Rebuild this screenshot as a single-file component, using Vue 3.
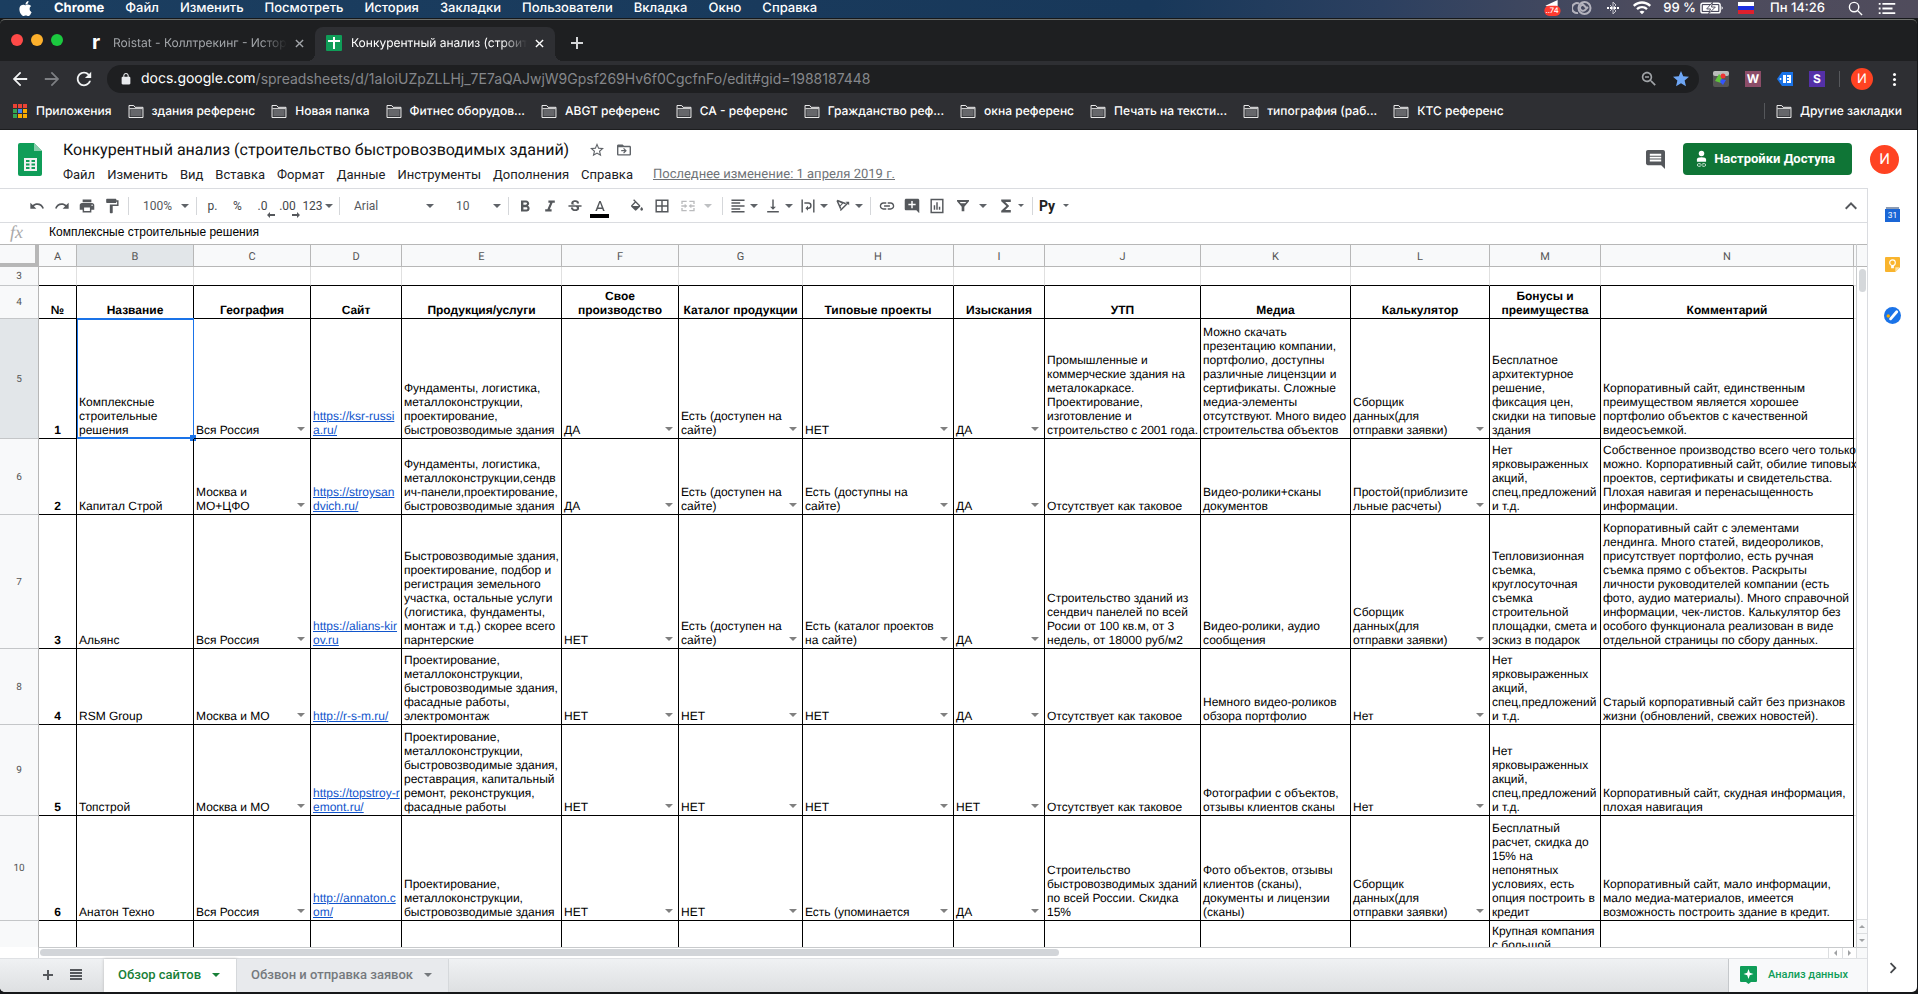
<script setup>
const osMenu = ['Файл', 'Изменить', 'Посмотреть', 'История', 'Закладки', 'Пользователи', 'Вкладка', 'Окно', 'Справка']
const bookmarks = ['здания референс', 'Новая папка', 'Фитнес оборудов...', 'ABGT референс', 'СА - референс', 'Гражданство реф...', 'окна референс', 'Печать на тексти...', 'типография (раб...', 'КТС референс']
const docMenu = ['Файл', 'Изменить', 'Вид', 'Вставка', 'Формат', 'Данные', 'Инструменты', 'Дополнения', 'Справка']
const appDots = ['#ea4335', '#ea4335', '#ea4335', '#34a853', '#4285f4', '#f9ab00', '#34a853', '#f9ab00', '#f9ab00']

const p = {
  apple: 'M12.152 6.896c-.948 0-2.415-1.078-3.96-1.04-2.04.027-3.91 1.183-4.961 3.014-2.117 3.675-.546 9.103 1.519 12.09 1.013 1.454 2.208 3.09 3.792 3.039 1.52-.065 2.09-.987 3.935-.987 1.831 0 2.35.987 3.96.948 1.637-.026 2.676-1.48 3.676-2.948 1.156-1.688 1.636-3.325 1.662-3.415-.039-.013-3.182-1.221-3.22-4.857-.026-3.04 2.48-4.494 2.597-4.559-1.429-2.09-3.623-2.324-4.39-2.376-2-.156-3.675 1.09-4.61 1.09zM15.53 3.83c.843-1.012 1.4-2.427 1.245-3.83-1.207.052-2.662.805-3.532 1.818-.78.896-1.454 2.338-1.273 3.714 1.338.104 2.715-.688 3.559-1.701',
  wifi: 'M1 9l2 2c4.97-4.97 13.03-4.97 18 0l2-2C16.93 2.93 7.08 2.93 1 9zm8 8l3 3 3-3c-1.65-1.66-4.34-1.66-6 0zm-4-4l2 2c2.76-2.76 7.24-2.76 10 0l2-2C15.14 9.14 8.87 9.14 5 13z',
  back: 'M20 11H7.83l5.59-5.59L12 4l-8 8 8 8 1.41-1.41L7.83 13H20v-2z',
  forward: 'M12 4l-1.41 1.41L16.17 11H4v2h12.17l-5.58 5.59L12 20l8-8z',
  reload: 'M17.65 6.35C16.2 4.9 14.21 4 12 4c-4.42 0-7.99 3.58-7.99 8s3.57 8 7.99 8c3.73 0 6.84-2.55 7.73-6h-2.08c-.82 2.33-3.04 4-5.65 4-3.31 0-6-2.69-6-6s2.69-6 6-6c1.66 0 3.14.69 4.22 1.78L13 11h7V4l-2.35 2.35z',
  lock: 'M18 8h-1V6c0-2.76-2.24-5-5-5S7 3.24 7 6v2H6c-1.1 0-2 .9-2 2v10c0 1.1.9 2 2 2h12c1.1 0 2-.9 2-2V10c0-1.1-.9-2-2-2zm-9-2c0-1.66 1.34-3 3-3s3 1.34 3 3v2H9V6z',
  zoomOut: 'M15.5 14h-.79l-.28-.27C15.41 12.59 16 11.11 16 9.5 16 5.91 13.09 3 9.5 3S3 5.91 3 9.5 5.91 16 9.5 16c1.61 0 3.09-.59 4.23-1.57l.27.28v.79l5 4.99L20.49 19l-4.99-5zm-6 0C7.01 14 5 11.99 5 9.5S7.01 5 9.5 5 14 7.01 14 9.5 11.99 14 9.5 14zM7 8.7h5v1.6H7z',
  star: 'M12 17.27L18.18 21l-1.64-7.03L22 9.24l-7.19-.61L12 2 9.19 8.63 2 9.24l5.46 4.73L5.82 21z',
  starLine: 'M22 9.24l-7.19-.62L12 2 9.19 8.63 2 9.24l5.46 4.73L5.82 21 12 17.27 18.18 21l-1.63-7.03L22 9.24zM12 15.4l-3.76 2.27 1-4.28-3.32-2.88 4.38-.38L12 6.1l1.71 4.04 4.38.38-3.32 2.88 1 4.28L12 15.4z',
  moveTo: 'M20 6h-8l-2-2H4c-1.1 0-2 .9-2 2v12c0 1.1.9 2 2 2h16c1.1 0 2-.9 2-2V8c0-1.1-.9-2-2-2zm0 12H4V8h16v10zM12 9l-1.2 1.2 1.9 1.9H8v1.8h4.7l-1.9 1.9L12 17l4-4z',
  undo: 'M12.5 8c-2.65 0-5.05.99-6.9 2.6L2 7v9h9l-3.62-3.62c1.39-1.16 3.16-1.88 5.12-1.88 3.54 0 6.55 2.31 7.6 5.5l2.37-.78C21.08 11.03 17.15 8 12.5 8z',
  redo: 'M18.4 10.6C16.55 8.99 14.15 8 11.5 8c-4.65 0-8.58 3.03-9.96 7.22L3.9 16c1.05-3.19 4.05-5.5 7.6-5.5 1.95 0 3.73.72 5.12 1.88L13 16h9V7l-3.6 3.6z',
  print: 'M19 8H5c-1.66 0-3 1.34-3 3v6h4v4h12v-4h4v-6c0-1.66-1.34-3-3-3zm-3 11H8v-5h8v5zm3-7c-.55 0-1-.45-1-1s.45-1 1-1 1 .45 1 1-.45 1-1 1zm-1-9H6v4h12V3z',
  paint: 'M18 4V3c0-.55-.45-1-1-1H5c-.55 0-1 .45-1 1v4c0 .55.45 1 1 1h12c.55 0 1-.45 1-1V6h1v4H9v11c0 .55.45 1 1 1h2c.55 0 1-.45 1-1v-9h8V4h-3z',
  bold: 'M15.6 10.79c.97-.67 1.65-1.77 1.65-2.79 0-2.26-1.75-4-4-4H7v14h7.04c2.09 0 3.71-1.7 3.71-3.79 0-1.52-.86-2.82-2.15-3.42zM10 6.5h3c.83 0 1.5.67 1.5 1.5s-.67 1.5-1.5 1.5h-3v-3zm3.5 9H10v-3h3.5c.83 0 1.5.67 1.5 1.5s-.67 1.5-1.5 1.5z',
  italic: 'M10 4v3h2.21l-3.42 8H6v3h8v-3h-2.21l3.42-8H18V4z',
  strike: 'M7.24 8.75c-.26-.48-.39-1.03-.39-1.67 0-.61.13-1.16.4-1.67.26-.5.63-.93 1.11-1.29.48-.35 1.05-.63 1.7-.83.66-.19 1.39-.29 2.18-.29.81 0 1.54.11 2.21.34.66.22 1.23.54 1.69.94.47.4.83.88 1.08 1.43.25.55.38 1.15.38 1.81h-3.01c0-.31-.05-.59-.15-.85-.09-.27-.24-.49-.44-.68-.2-.19-.45-.33-.75-.44-.3-.1-.66-.16-1.06-.16-.39 0-.74.04-1.03.13-.29.09-.53.21-.72.36-.19.16-.34.34-.44.55-.1.21-.15.43-.15.66 0 .48.25.88.74 1.21.38.25.77.48 1.41.7H7.39c-.05-.08-.11-.17-.15-.25zM21 12v-2H3v2h9.62c.18.07.4.14.55.2.37.17.66.34.87.51.21.17.35.36.43.57.07.2.11.43.11.69 0 .23-.05.45-.14.66-.09.2-.23.38-.42.53-.19.15-.42.26-.71.35-.29.08-.63.13-1.01.13-.43 0-.83-.04-1.18-.13s-.66-.23-.91-.42c-.25-.19-.45-.44-.59-.75-.14-.31-.25-.76-.25-1.21H6.4c0 .55.08 1.13.24 1.58.16.45.37.85.65 1.21.28.35.6.66.98.92.37.26.78.48 1.22.65.44.17.9.3 1.38.39.48.08.96.13 1.44.13.8 0 1.53-.09 2.18-.28s1.21-.45 1.67-.79c.46-.34.82-.77 1.07-1.27s.38-1.07.38-1.71c0-.6-.1-1.14-.31-1.61-.05-.11-.11-.23-.17-.33H21z',
  textColor: 'M11 3L5.5 17h2.25l1.12-3h6.25l1.12 3h2.25L13 3h-2zm-1.38 9L12 5.67 14.38 12H9.62z',
  fill: 'M16.56 8.94L7.62 0 6.21 1.41l2.38 2.38-5.15 5.15c-.59.59-.59 1.54 0 2.12l5.5 5.5c.29.29.68.44 1.06.44s.77-.15 1.06-.44l5.5-5.5c.59-.58.59-1.53 0-2.12zM5.21 10L10 5.21 14.79 10H5.21zM19 11.5s-2 2.17-2 3.5c0 1.1.9 2 2 2s2-.9 2-2c0-1.33-2-3.5-2-3.5z',
  borders: 'M3 3v18h18V3H3zm8 16H5v-6h6v6zm0-8H5V5h6v6zm8 8h-6v-6h6v6zm0-8h-6V5h6v6z',
  merge: 'M2 4h8v2H4v3H2zM14 4h8v5h-2V6h-6zM2 15h2v3h6v2H2zM20 15h2v5h-8v-2h6zM2 11h5V8.500l4 3.500-4 3.500V13H2zM22 11h-5V8.500L13 12l4 3.500V13h5z',
  align: 'M15 15H3v2h12v-2zm0-8H3v2h12V7zM3 13h18v-2H3v2zm0 8h18v-2H3v2zM3 3v2h18V3H3z',
  valign: 'M16 13h-3V3h-2v10H8l4 4 4-4zM4 19v2h16v-2H4z',
  wrap: 'M3 3h2v18H3zM19 3h2v18h-2zM7 7h5.500a4.500 4.500 0 0 1 0 9H12v2.500L8.500 15 12 11.500V14h.5a2.500 2.500 0 0 0 0-5H7z',
  rotate: 'M3 5l1.500-1.500 12 4.500-1.700 1.600-2.600-1-3.600 3.600 1 2.600L8 16.500zm2.700 1.100l2.200 5 2.600-2.700zM20.500 6v5l-1.800-1.800L9 19l-1.400-1.400 9.700-9.800L15.500 6z',
  link: 'M3.9 12c0-1.71 1.39-3.1 3.1-3.1h4V7H7c-2.76 0-5 2.24-5 5s2.24 5 5 5h4v-1.900H7c-1.710 0-3.100-1.390-3.100-3.100zM8 13h8v-2H8v2zm9-6h-4v1.900h4c1.710 0 3.100 1.390 3.100 3.100s-1.390 3.100-3.100 3.100h-4V17h4c2.760 0 5-2.240 5-5s-2.240-5-5-5z',
  addComment: 'M22 4c0-1.1-.9-2-2-2H4c-1.1 0-2 .9-2 2v12c0 1.1.9 2 2 2h14l4 4V4zm-5 7h-4v4h-2v-4H7V9h4V5h2v4h4v2z',
  chart: 'M3 2h18v20H3zm2 2v16h14V4zM7.500 11h2v6h-2zM11 7h2v10h-2zM14.500 13h2v4h-2z',
  filter: 'M3 3h18v2l-7 8v7h-4v-7L3 5zm4 3l1.800 2h6.400L17 6z',
  sum: 'M18 4H6v2l6.500 6L6 18v2h12v-3h-7l5-5-5-5h7z',
  comment: 'M21.990 4c0-1.100-.890-2-1.990-2H4c-1.100 0-2 .9-2 2v12c0 1.100.9 2 2 2h14l4 4-.010-18zM18 14H6v-2h12v2zm0-3H6V9h12v2zm0-3H6V6h12v2z',
  up: 'M12 8l-6 6 1.410 1.410L12 10.830l4.590 4.580L18 14z',
  right: 'M10 6L8.590 7.410 13.170 12l-4.580 4.590L10 18l6-6z'
}

// Column letters with their widths; the last one takes the rest of the pane.
const columns = [
  { id: 'A', w: 38 }, { id: 'B', w: 117 }, { id: 'C', w: 117 }, { id: 'D', w: 91 }, { id: 'E', w: 160 },
  { id: 'F', w: 117 }, { id: 'G', w: 124 }, { id: 'H', w: 151 }, { id: 'I', w: 91 }, { id: 'J', w: 156 },
  { id: 'K', w: 150 }, { id: 'L', w: 139 }, { id: 'M', w: 111 }, { id: 'N', w: null }
]
const listColumns = [2, 5, 6, 7, 8, 11]
const titles = ['№', 'Название', 'География', 'Сайт', 'Продукция/услуги', 'Свое\nпроизводство', 'Каталог продукции', 'Типовые проекты', 'Изыскания', 'УТП', 'Медиа', 'Калькулятор', 'Бонусы и\nпреимущества', 'Комментарий']
const noOffers = 'Нет\nярковыраженных\nакций,\nспец,предложений\nи т.д.'
const onSite = 'Есть (доступен на\nсайте)'
const collector = 'Сборщик\nданных(для\nотправки заявки)'
const rows = [
  { n: 5, h: 120, cells: ['1', 'Комплексные\nстроительные\nрешения', 'Вся Россия', 'https://ksr-russi\na.ru/', 'Фундаменты, логистика,\nметаллоконструкции,\nпроектирование,\nбыстровозводимые здания', 'ДА', onSite, 'НЕТ', 'ДА', 'Промышленные и\nкоммерческие здания на\nметалокаркасе.\nПроектирование,\nизготовление и\nстроительство с 2001 года.', 'Можно скачать\nпрезентацию компании,\nпортфолио, доступны\nразличные лицензции и\nсертификаты. Сложные\nмедиа-элементы\nотсутствуют. Много видео\nстроительства объектов', collector, 'Бесплатное\nархитектурное\nрешение,\nфиксация цен,\nскидки на типовые\nздания', 'Корпоративный сайт, единственным\nпреимуществом является хорошее\nпортфолио объектов с качественной\nвидеосъемкой.'] },
  { n: 6, h: 76, cells: ['2', 'Капитал Строй', 'Москва и\nМО+ЦФО', 'https://stroysan\ndvich.ru/', 'Фундаменты, логистика,\nметаллоконструкции,сендв\nич-панели,проектирование,\nбыстровозводимые здания', 'ДА', onSite, 'Есть (доступны на\nсайте)', 'ДА', 'Отсутствует как таковое', 'Видео-ролики+сканы\nдокументов', 'Простой(приблизите\nльные расчеты)', noOffers, 'Собственное производство всего чего только\nможно. Корпоративный сайт, обилие типовых\nпроектов, сертификаты и свидетельства.\nПлохая навигая и перенасыщенность\nинформации.'] },
  { n: 7, h: 134, cells: ['3', 'Альянс', 'Вся Россия', 'https://alians-kir\nov.ru', 'Быстровозводимые здания,\nпроектирование, подбор и\nрегистрация земельного\nучастка, остальные услуги\n(логистика, фундаменты,\nмонтаж и т.д.) скорее всего\nпарнтерские', 'НЕТ', onSite, 'Есть (каталог проектов\nна сайте)', 'ДА', 'Строительство зданий из\nсендвич панелей по всей\nРосии от 100 кв.м, от 3\nнедель, от 18000 руб/м2', 'Видео-ролики, аудио\nсообщения', collector, 'Тепловизионная\nсъемка,\nкруглосуточная\nсъемка\nстроительной\nплощадки, смета и\nэскиз в подарок', 'Корпоративный сайт с элементами\nлендинга. Много статей, видеороликов,\nприсутствует портфолио, есть ручная\nсъемка прямо с объектов. Раскрыты\nличности руководителей компании (есть\nфото, аудио материалы). Много справочной\nинформации, чек-листов. Калькулятор без\nособого функционала реализован в виде\nотдельной страницы по сбору данных.'] },
  { n: 8, h: 76, cells: ['4', 'RSM Group', 'Москва и МО', 'http://r-s-m.ru/', 'Проектирование,\nметаллоконструкции,\nбыстровозводимые здания,\nфасадные работы,\nэлектромонтаж', 'НЕТ', 'НЕТ', 'НЕТ', 'ДА', 'Отсутствует как таковое', 'Немного видео-роликов\nобзора портфолио', 'Нет', noOffers, 'Старый корпоративный сайт без признаков\nжизни (обновлений, свежих новостей).'] },
  { n: 9, h: 91, cells: ['5', 'Топстрой', 'Москва и МО', 'https://topstroy-r\nemont.ru/', 'Проектирование,\nметаллоконструкции,\nбыстровозводимые здания,\nреставрация, капитальный\nремонт, реконструкция,\nфасадные работы', 'НЕТ', 'НЕТ', 'НЕТ', 'НЕТ', 'Отсутствует как таковое', 'Фотографии с объектов,\nотзывы клиентов сканы', 'Нет', noOffers, 'Корпоративный сайт, скудная информация,\nплохая навигация'] },
  { n: 10, h: 105, cells: ['6', 'Анатон Техно', 'Вся Россия', 'http://annaton.c\nom/', 'Проектирование,\nметаллоконструкции,\nбыстровозводимые здания', 'НЕТ', 'НЕТ', 'Есть (упоминается', 'ДА', 'Строительство\nбыстровозводимых зданий\nпо всей России. Скидка\n15%', 'Фото объектов, отзывы\nклиентов (сканы),\nдокументы и лицензии\n(сканы)', collector, 'Бесплатный\nрасчет, скидка до\n15% на\nнепонятных\nусловиях, есть\nопция построить в\nкредит', 'Корпоративный сайт, мало информации,\nмало медиа-материалов, имеется\nвозможность построить здание в кредит.'] }
]
const nextRow = columns.map((c) => (c.id === 'M' ? 'Крупная компания\nс большой' : ''))
</script>

<template>
  <div class="desktop">
    <header class="menubar">
      <svg class="apple" viewBox="0 0 24 24"><path :d="p.apple" /></svg>
      <strong>Chrome</strong>
      <span v-for="m in osMenu" :key="m">{{ m }}</span>
      <div class="status">
        <svg class="s-tg" viewBox="0 0 18 17">
          <path d="M2 6L15 0v8L9 9z" fill="#fff" />
          <rect x="1" y="6" width="17" height="11" rx="5" fill="#ff3b30" />
          <text x="9" y="14" text-anchor="middle" font-size="8" fill="#fff">..74</text>
        </svg>
        <svg class="s-cc" viewBox="0 0 20 14" fill="none" stroke="#b4b3bd" stroke-width="2">
          <circle cx="12.500" cy="7" r="6" /><path d="M7 2.500A5 5 0 1 0 6 12M12 4a3 3 0 0 0-4 3 3 3 0 0 0 5 2l3-3M9 1.500l6 6" />
        </svg>
        <svg class="s-bt" viewBox="0 0 12 14" fill="none" stroke="#c6c5cd" stroke-width="1">
          <path d="M3 4l6 6-3 3V1l3 3-6 6" /><path d="M0 7h2M3 7h2M7 7h2M10 7h2" stroke="#fff" stroke-width="2" />
        </svg>
        <svg class="s-wifi" viewBox="0 4 24 17"><path :d="p.wifi" /></svg>
        <span class="pct">99 %</span>
        <svg class="s-bat" viewBox="0 0 24 12">
          <rect x="1" y="1" width="20" height="10" rx="2" fill="none" stroke="#fff" stroke-width="1.500" />
          <rect x="3" y="3" width="16" height="6" fill="#fff" /><path d="M22.500 4v4l1.500-2z" fill="#fff" />
          <path d="M13 0L7 7h4l-2 5 7-7h-4z" fill="#fff" stroke="#4c4a5b" stroke-width="1" />
        </svg>
        <span class="flag" />
        <span class="clock">Пн 14:26</span>
        <svg class="s-search" viewBox="0 0 16 16" fill="none" stroke="#fff" stroke-width="1.500"><circle cx="6.500" cy="6.500" r="5" /><path d="M10 10l5 5" /></svg>
        <svg class="s-list" viewBox="0 0 18 12" fill="#fff"><path d="M0 0h2v2H0zM4 0h14v2H4zM0 5h2v2H0zM4 5h11v2H4zM0 10h2v2H0zM4 10h14v2H4z" /></svg>
      </div>
    </header>

    <div class="window">
      <div class="tabstrip">
        <div class="lights"><i class="red" /><i class="yellow" /><i class="green" /></div>
        <div class="tab">
          <span class="roi">r</span>
          <span class="tab-text">Roistat - Коллтрекинг - Истор</span>
          <button class="close" aria-label="Закрыть"><svg viewBox="0 0 10 10"><path d="M1 1l8 8M9 1l-8 8" /></svg></button>
        </div>
        <div class="tab active">
          <svg class="favicon" viewBox="0 0 16 16"><rect width="16" height="16" rx="1" fill="#0f9d58" /><path d="M7 2h2v3h5v2H9v7H7V7H2V5h5z" fill="#fff" /></svg>
          <span class="tab-text">Конкурентный анализ (строит</span>
          <button class="close" aria-label="Закрыть"><svg viewBox="0 0 10 10"><path d="M1 1l8 8M9 1l-8 8" /></svg></button>
        </div>
        <button class="newtab" aria-label="Новая вкладка"><svg viewBox="0 0 12 12"><path d="M6 0v12M0 6h12" /></svg></button>
      </div>

      <div class="navbar">
        <button class="nav" aria-label="Назад"><svg viewBox="2 2 20 20"><path :d="p.back" /></svg></button>
        <button class="nav dim" aria-label="Вперед"><svg viewBox="2 2 20 20"><path :d="p.forward" /></svg></button>
        <button class="nav" aria-label="Обновить"><svg viewBox="2 2 20 20"><path :d="p.reload" /></svg></button>
        <div class="omnibox">
          <svg class="lock" viewBox="3 1 18 22"><path :d="p.lock" /></svg>
          <label for="url">docs.google.com</label>
          <input id="url" value="/spreadsheets/d/1aIoiUZpZLLHj_7E7aQAJwjW9Gpsf269Hv6f0CgcfnFo/edit#gid=1988187448">
          <svg class="zoomicon" viewBox="2 2 20 20"><path :d="p.zoomOut" /></svg>
          <svg class="staricon" viewBox="2 2 20 20"><path :d="p.star" /></svg>
        </div>
        <div class="exts">
          <svg viewBox="0 0 16 16"><rect width="16" height="16" rx="2" fill="#555" /><rect width="16" height="5" rx="2" fill="#bbb" /><path d="M6 3l3 3-1 6-6-2z" fill="#5fc13b" /><circle cx="10" cy="5" r="2.500" fill="#e33" /><path d="M8 8l5 1-3 5-3-3z" fill="#35f" /></svg>
          <span class="ext w">W</span>
          <svg viewBox="0 0 16 16"><path d="M5 1h11v14H5L0 8z" fill="#1a73e8" /><path d="M6 4h3v8H6zM10 4h4v8h-4v-2h2V9h-2V7h2V6h-2z" fill="#fff" /><circle cx="3.500" cy="8" r="1" fill="#fff" /></svg>
          <span class="ext s">S</span>
        </div>
        <span class="vline" />
        <span class="profile">И</span>
        <button class="dots" aria-label="Меню"><i /><i /><i /></button>
      </div>

      <nav class="bookmarks">
        <span class="apps"><i v-for="(c, i) in appDots" :key="i" :style="{ background: c }" /></span>
        <a href="#" class="apps-link">Приложения</a>
        <a v-for="b in bookmarks" :key="b" href="#" class="bm">
          <svg viewBox="0 0 16 14"><path d="M.5 13.500V.5h5l1.500 2h8.500v11z" fill="none" stroke="#fff" /><path d="M2 5h12v7H2z" fill="#66676b" /><path d="M1 4h14" stroke="#fff" /></svg>{{ b }}
        </a>
        <a href="#" class="bm other">
          <svg viewBox="0 0 16 14"><path d="M.5 13.500V.5h5l1.500 2h8.500v11z" fill="none" stroke="#fff" /><path d="M2 5h12v7H2z" fill="#66676b" /><path d="M1 4h14" stroke="#fff" /></svg>Другие закладки
        </a>
      </nav>

      <div class="docs">
        <header class="dochead">
          <svg class="logo" viewBox="0 0 24 33">
            <path d="M2 0h14l8 8v23a2 2 0 0 1-2 2H2a2 2 0 0 1-2-2V2a2 2 0 0 1 2-2z" fill="#0f9d58" /><path d="M16 0l8 8h-8z" fill="#87ceac" />
            <path d="M6 15h13v13H6zm2 2v2h3.500v-2zm5.500 0v2H17v-2zM8 20.500v2h3.500v-2zm5.500 0v2H17v-2zM8 24v2h3.500v-2zm5.500 0v2H17v-2z" fill="#f1f1f1" fill-rule="evenodd" />
          </svg>
          <div class="headmain">
            <div class="titlerow">
              <h1>Конкурентный анализ (строительство быстровозводимых зданий)</h1>
              <button aria-label="Пометить"><svg viewBox="2 2 20 20"><path :d="p.starLine" /></svg></button>
              <button aria-label="Переместить"><svg viewBox="2 2 20 20"><path :d="p.moveTo" /></svg></button>
            </div>
            <div class="docmenu">
              <button v-for="m in docMenu" :key="m">{{ m }}</button>
              <a href="#">Последнее изменение: 1 апреля 2019 г.</a>
            </div>
          </div>
          <button class="comments" aria-label="Комментарии"><svg viewBox="2 2 20 20"><path :d="p.comment" /></svg></button>
          <button class="share">
            <svg viewBox="0 0 12 18" fill="#fff"><circle cx="6" cy="3" r="3" /><path d="M1 12V9.500Q1 7 6 7t5 2.500V12z" /><path d="M5 14H3a1.500 1.500 0 0 0 0 3h2M7 14h2a1.500 1.500 0 0 1 0 3H7M4 15.500h4" fill="none" stroke="#fff" stroke-width=".8" /></svg>
            Настройки Доступа
          </button>
          <span class="avatar">И</span>
        </header>

        <div class="body">
          <main class="sheet">
            <div class="toolbar">
              <button class="tb" aria-label="Отменить"><svg viewBox="0 0 24 24"><path :d="p.undo" /></svg></button>
              <button class="tb" aria-label="Повторить"><svg viewBox="0 0 24 24"><path :d="p.redo" /></svg></button>
              <button class="tb" aria-label="Печать"><svg viewBox="1 1 22 22"><path :d="p.print" /></svg></button>
              <button class="tb" aria-label="Формат"><svg viewBox="1 1 22 22"><path :d="p.paint" /></svg></button>
              <span class="sep" />
              <label class="pick zoom"><select aria-label="Масштаб"><option>100%</option></select><i class="caret" /></label>
              <span class="sep" />
              <button class="tb txt">р.</button>
              <button class="tb txt">%</button>
              <button class="tb txt dec">.0<svg viewBox="0 0 8 6"><path d="M0 3l3-3v2h5v2H3v2z" /></svg></button>
              <button class="tb txt dec">.00<svg viewBox="0 0 8 6"><path d="M8 3L5 0v2H0v2h5v2z" /></svg></button>
              <button class="tb txt num">123<i class="caret" /></button>
              <span class="sep" />
              <label class="pick font"><select aria-label="Шрифт"><option>Arial</option></select><i class="caret" /></label>
              <label class="pick size"><select aria-label="Размер"><option>10</option></select><i class="caret" /></label>
              <span class="sep" />
              <button class="tb" aria-label="Жирный"><svg viewBox="2 1 20 20"><path :d="p.bold" /></svg></button>
              <button class="tb" aria-label="Курсив"><svg viewBox="2 1 20 20"><path :d="p.italic" /></svg></button>
              <button class="tb" aria-label="Зачеркнутый"><svg viewBox="1 0 22 22"><path :d="p.strike" /></svg></button>
              <button class="tb color" aria-label="Цвет текста"><svg viewBox="1 -1 22 22"><path :d="p.textColor" /></svg></button>
              <button class="tb spaced" aria-label="Цвет заливки"><svg viewBox="0 -2 24 24"><path :d="p.fill" /></svg></button>
              <button class="tb" aria-label="Границы"><svg viewBox="1 1 22 22"><path :d="p.borders" /></svg></button>
              <button class="tb wide off" aria-label="Объединить"><svg viewBox="0 0 24 24"><path :d="p.merge" /></svg><i class="caret" /></button>
              <span class="sep" />
              <button class="tb menu" aria-label="По горизонтали"><svg viewBox="1 1 22 22"><path :d="p.align" /></svg><i class="caret" /></button>
              <button class="tb menu" aria-label="По вертикали"><svg viewBox="1 1 22 22"><path :d="p.valign" /></svg><i class="caret" /></button>
              <button class="tb menu" aria-label="Перенос"><svg viewBox="1 1 22 22"><path :d="p.wrap" /></svg><i class="caret" /></button>
              <button class="tb menu" aria-label="Поворот"><svg viewBox="1 1 22 22"><path :d="p.rotate" /></svg><i class="caret" /></button>
              <span class="sep" />
              <button class="tb" aria-label="Ссылка"><svg viewBox="1 1 22 22"><path :d="p.link" /></svg></button>
              <button class="tb" aria-label="Комментарий"><svg viewBox="1 1 22 22"><path :d="p.addComment" /></svg></button>
              <button class="tb" aria-label="Диаграмма"><svg viewBox="1 1 22 22"><path :d="p.chart" /></svg></button>
              <button class="tb wide" aria-label="Фильтр"><svg viewBox="0 0 24 24"><path :d="p.filter" /></svg><i class="caret" /></button>
              <button class="tb menu" aria-label="Функции"><svg viewBox="2 2 20 20"><path :d="p.sum" /></svg><i class="caret small" /></button>
              <span class="sep" />
              <button class="tb lang">Pу<i class="caret small" /></button>
              <button class="tb collapse" aria-label="Свернуть"><svg viewBox="4 4 16 16"><path :d="p.up" /></svg></button>
            </div>

            <div class="formula">
              <label for="fx">fx</label>
              <input id="fx" value="Комплексные строительные решения">
            </div>

            <div class="gridarea">
              <div class="pane">
                <table>
                  <colgroup>
                    <col class="rowhead">
                    <col v-for="c in columns" :key="c.id" :style="c.w ? { width: c.w + 'px' } : null">
                    <col class="rest">
                  </colgroup>
                  <thead>
                    <tr>
                      <th class="corner" />
                      <th v-for="c in columns" :key="c.id" :class="{ sel: c.id === 'B' }">{{ c.id }}</th>
                      <th />
                    </tr>
                  </thead>
                  <tbody>
                    <tr class="r3"><th>3</th><td v-for="c in columns" :key="c.id" /><td class="tail" /></tr>
                    <tr class="r4"><th>4</th><td v-for="t in titles" :key="t">{{ t }}</td><td class="tail" /></tr>
                    <tr v-for="r in rows" :key="r.n" :style="{ height: r.h + 'px' }">
                      <th :class="{ sel: r.n === 5 }">{{ r.n }}</th>
                      <td v-for="(t, i) in r.cells" :key="i" :class="{ idx: i === 0 }">
                        <a v-if="i === 3" href="#">{{ t }}</a>
                        <template v-else>{{ t }}</template>
                        <button v-if="listColumns.includes(i)" class="drop" aria-label="Выбрать" />
                        <span v-if="r.n === 5 && i === 1" class="cursor" />
                      </td>
                      <td class="tail" />
                    </tr>
                    <tr class="r11"><th /><td v-for="(t, i) in nextRow" :key="i">{{ t }}</td><td class="tail" /></tr>
                  </tbody>
                </table>
              </div>
              <div class="vscroll">
                <span class="vhead" />
                <span class="vthumb" />
                <button class="first" aria-label="Вверх"><i class="up" /></button>
                <button aria-label="Вниз"><i class="down" /></button>
              </div>
            </div>
            <div class="hscroll">
              <div class="track"><span /></div>
              <button aria-label="Влево"><i class="left" /></button>
              <button aria-label="Вправо"><i class="rt" /></button>
              <b />
            </div>

            <footer class="tabs">
              <button class="plus" aria-label="Добавить лист"><svg viewBox="0 0 10 10"><path d="M4 0h2v4h4v2H6v4H4V6H0V4h4z" /></svg></button>
              <button class="all" aria-label="Все листы"><svg viewBox="0 0 12 11"><path d="M0 0h12v2H0zM0 3h12v2H0zM0 6h12v2H0zM0 9h12v2H0z" /></svg></button>
              <button class="stab on">Обзор сайтов<i class="caret" /></button>
              <button class="stab">Обзвон и отправка заявок<i class="caret" /></button>
              <button class="explore">
                <svg viewBox="0 0 17 18"><path d="M1 0h15a1 1 0 0 1 1 1v14a1 1 0 0 1-1 1h-5l-2.500 2L6 16H1a1 1 0 0 1-1-1V1a1 1 0 0 1 1-1z" fill="#0f9d58" /><path d="M8.500 3l1.300 3.700L13.500 8 9.800 9.300 8.500 13 7.200 9.300 3.500 8l3.700-1.300z" fill="#fff" /></svg>
                Анализ данных
              </button>
            </footer>
          </main>

          <aside class="side">
            <svg viewBox="0 0 16 16"><path d="M1 0h14v3H1z" fill="#8b9bb4" /><path d="M0 2h16v14H0z" fill="#1a66d6" /><text x="8" y="12" text-anchor="middle" font-size="9" fill="#fff">31</text></svg>
            <svg viewBox="0 0 16 16"><path d="M1 0h14a1 1 0 0 1 1 1v10l-5 5H1a1 1 0 0 1-1-1V1a1 1 0 0 1 1-1z" fill="#f9b42d" /><path d="M11 16v-5h5z" fill="#fde2a5" /><circle cx="8" cy="6" r="3" fill="none" stroke="#fff" stroke-width="1.200" /><path d="M6.500 9h3v3h-3z" fill="#fff" /></svg>
            <svg class="tasks" viewBox="0 0 18 18"><circle cx="9" cy="9" r="9" fill="#1a73e8" /><circle cx="4.500" cy="9.500" r="1.800" fill="#f9ab00" /><path d="M7 12.500L13.500 5" stroke="#fff" stroke-width="3" stroke-linecap="round" /></svg>
            <button aria-label="Скрыть панель"><svg viewBox="2 2 20 20"><path :d="p.right" /></svg></button>
          </aside>
        </div>
      </div>
    </div>
  </div>
</template>

<style>
body { background: #000; }
</style>

<style scoped>
* { box-sizing: border-box; }
button, input, select { border: 0; margin: 0; padding: 0; background: none; font: inherit; color: inherit; outline: 0; border-radius: 0; }
button { display: flex; align-items: center; justify-content: center; flex: none; white-space: nowrap; }
svg { display: block; flex: none; }
a { color: inherit; text-decoration: none; }
.desktop { height: 100vh; display: flex; flex-direction: column; overflow: hidden; background: #16181a; text-rendering: geometricPrecision; }

.menubar { flex: none; height: 18px; padding: 0 22px 2px 18px; display: flex; align-items: center; gap: 21px; color: #fff; font: 500 13px/16px Inter, sans-serif; white-space: nowrap; background: linear-gradient(90deg, #1b3e60 0, #18385a 60%, #2c4060 72%, #4b4b5e 85%, #504c5c 100%); }
.menubar strong { font-weight: 700; }
.apple { width: 15px; height: 15px; fill: #fff; }
.status { margin-left: auto; display: flex; align-items: center; }
.s-tg { width: 18px; height: 16px; margin-right: 11px; }
.s-cc { width: 20px; height: 14px; margin-right: 15px; }
.s-bt { width: 12px; height: 14px; margin-right: 13px; }
.s-wifi { width: 20px; height: 14px; fill: #fff; margin-right: 11px; }
.pct { margin-right: 4px; }
.s-bat { width: 23px; height: 12px; margin-right: 15px; }
.flag { width: 16px; height: 12px; margin-right: 16px; background: linear-gradient(#fff 0 33%, #1b2ee0 33% 66%, #e0202c 66%); }
.clock { margin-right: 23px; }
.s-search { width: 15px; height: 15px; margin-right: 15px; }
.s-list { width: 18px; height: 11px; }

.window { flex: 1; min-height: 0; margin: 1px 1px 2px 0; display: flex; flex-direction: column; border-top: 1px solid #6e706c; border-radius: 5px; overflow: hidden; background: #1e1f21; color: #fff; font: 12px/16px Inter, sans-serif; }
.tabstrip { flex: none; height: 41px; padding: 7px 0 0 11px; display: flex; align-items: stretch; }
.lights { display: flex; gap: 8px; align-items: center; width: 66px; padding-bottom: 8px; }
.lights i { width: 12px; height: 12px; border-radius: 50%; }
.red { background: #ff4a48; }
.yellow { background: #fdb02c; }
.green { background: #1bc93f; }
.tab { position: relative; width: 238px; padding: 0 6px 2px 11px; display: flex; align-items: center; color: #a3a6aa; }
.tab.active { width: 240px; background: #2e2f33; border-radius: 8px 8px 0 0; color: #fff; }
.tab.active::before, .tab.active::after { content: ''; position: absolute; bottom: 0; width: 8px; height: 8px; }
.tab.active::before { left: -8px; background: radial-gradient(circle at 0 0, transparent 8px, #2e2f33 8px); }
.tab.active::after { right: -8px; background: radial-gradient(circle at 100% 0, transparent 8px, #2e2f33 8px); }
.favicon { width: 16px; height: 16px; margin-right: 9px; }
.roi { width: 16px; height: 16px; margin-right: 9px; color: #fff; font: 700 20px/14px Inter, sans-serif; text-align: center; }
.tab-text { flex: 1; overflow: hidden; white-space: nowrap; mask-image: linear-gradient(90deg, #000 85%, transparent); }
.close { width: 20px; margin-left: 2px; }
.close svg { width: 9px; height: 9px; fill: none; stroke: currentColor; stroke-width: 1.500; }
.newtab { width: 44px; padding-bottom: 2px; }
.newtab svg { width: 12px; height: 12px; stroke: #d5d6d8; stroke-width: 2; }
.navbar { flex: none; height: 36px; padding: 0 2px 0 11px; background: #2e2f33; display: flex; align-items: center; }
.nav { width: 32px; justify-content: flex-start; }
.nav svg { width: 18px; height: 18px; fill: #f1f3f4; }
.nav.dim svg { fill: #7d7f83; }
.omnibox { flex: 1; height: 28px; margin-right: 14px; padding: 0 10px 0 14px; border-radius: 14px; background: #1e1f21; display: flex; align-items: center; font: 14px/20px Inter, sans-serif; }
.omnibox label { flex: none; }
.omnibox input { flex: 1; color: #85878b; }
.lock { width: 10px; height: 12px; fill: #e8eaed; margin-right: 10px; }
.zoomicon { width: 16px; height: 16px; fill: #a0a3a7; margin-right: 16px; }
.staricon { width: 16px; height: 16px; fill: #6ea6f5; }
.exts { display: flex; gap: 16px; }
.exts svg, .ext { width: 16px; height: 16px; }
.ext { text-align: center; font: 700 12px/16px Inter, sans-serif; }
.w { background: #8c4d68; }
.s { background: #5430a8; }
.vline { width: 1px; height: 16px; margin: 0 11px 0 14px; background: #56585c; }
.profile { width: 22px; height: 22px; border-radius: 50%; background: #ff4322; text-align: center; font: 13px/22px Inter, sans-serif; }
.dots { width: 42px; flex-direction: column; gap: 2px; }
.dots i { width: 3px; height: 3px; border-radius: 50%; background: #fff; }
.bookmarks { flex: none; height: 33px; padding: 0 15px 4px 13px; background: #2e2f33; border-bottom: 1px solid #1c1d1f; display: flex; align-items: center; gap: 16px; font: 500 12px/16px Inter, sans-serif; white-space: nowrap; }
.apps { display: grid; grid-template-columns: repeat(3, 4px); gap: 1px; margin-right: -7px; }
.apps i { height: 4px; }
.bm { display: flex; align-items: center; gap: 8px; }
.bm svg { width: 16px; height: 13px; }
.other { margin-left: auto; padding-left: 11px; border-left: 1px solid #55575b; }

.docs { flex: 1; min-height: 0; display: flex; flex-direction: column; background: #fff; color: #202124; font-family: Roboto, sans-serif; }
.dochead { flex: none; height: 58px; padding: 0 18px; display: flex; align-items: center; }
.logo { width: 24px; height: 33px; margin-right: 21px; }
.headmain { flex: 1; padding-top: 4px; }
.titlerow { display: flex; align-items: center; gap: 13px; }
h1 { margin: 0 8px 0 0; font: 400 16px/24px Roboto, sans-serif; color: #111; white-space: nowrap; }
.titlerow svg { width: 14px; height: 14px; fill: #5f6368; }
.docmenu { display: flex; align-items: center; gap: 12px; font-size: 13px; line-height: 20px; margin-top: 3px; }
.docmenu a { margin-left: 8px; color: #6f7377; text-decoration: underline; white-space: nowrap; }
.comments svg { width: 19px; height: 19px; fill: #55585c; }
.share { height: 32px; margin: 0 18px; padding: 0 17px 0 13px; gap: 7px; border-radius: 4px; background: #0f7536; color: #fff; font: 700 13px/20px Roboto, sans-serif; }
.share svg { width: 11px; height: 18px; }
.avatar { width: 29px; height: 29px; border-radius: 50%; background: #ff4322; color: #fff; font: 15px/29px Roboto, sans-serif; text-align: center; }
.body { flex: 1; min-height: 0; display: flex; }
.sheet { flex: 1; min-width: 0; display: flex; flex-direction: column; }

.toolbar { flex: none; height: 35px; padding-left: 24px; border-top: 1px solid #dadce0; border-bottom: 1px solid #dadce0; display: flex; align-items: center; color: #55585c; font-size: 12px; line-height: 16px; }
.tb { width: 25px; height: 26px; position: relative; }
.tb svg { width: 16px; height: 16px; fill: #55585c; }
.sep { width: 1px; height: 18px; margin: 0 3px 0 4px; background: #d5d7da; }
.caret { width: 0; height: 0; border: 4px solid transparent; border-top-color: #5f6368; border-bottom: 0; }
.caret.small { border-width: 3px 3px 0; }
.pick { display: flex; align-items: center; padding-right: 3px; }
.pick select { appearance: none; flex: 1; min-width: 0; }
.zoom { width: 60px; padding-left: 11px; }
.font { width: 98px; padding-left: 11px; padding-right: 7px; }
.size { width: 63px; padding-left: 15px; }
.tb.txt { color: #44474b; }
.tb.dec svg { position: absolute; right: 0; bottom: 1px; width: 8px; height: 6px; }
.tb.num { width: 35px; gap: 2px; }
.color::after { content: ''; position: absolute; left: 3px; bottom: 1px; width: 19px; height: 4px; background: #000; }
.spaced { margin-left: 12px; }
.tb.wide { width: 44px; gap: 8px; }
.off { opacity: .4; }
.tb.menu { width: 35px; gap: 4px; }
.tb.lang { width: 36px; gap: 8px; color: #222; font: 700 14px/16px Roboto, sans-serif; }
.collapse { margin-left: auto; margin-right: 4px; }

.formula { flex: none; height: 21px; display: flex; align-items: center; padding-bottom: 3px; }
.formula label { width: 49px; padding-left: 10px; color: #a8a8a8; font: italic 18px/18px "Liberation Serif", serif; }
.formula input { flex: 1; color: #000; font: 12px/16px "Liberation Sans", Arial, sans-serif; }

.gridarea { flex: 1; min-height: 0; display: flex; }
.pane { flex: 1; min-width: 0; overflow: hidden; border-top: 1px solid #b7b7b7; }
table { width: 100%; table-layout: fixed; border-collapse: separate; border-spacing: 0; font: 12px/14px "Liberation Sans", Arial, sans-serif; color: #000; }
.rowhead { width: 39px; }
.rest { width: 2px; }
thead tr { height: 22px; }
th { padding: 2px 0 0; border: solid #b7b7b7; border-width: 0 1px 1px 0; background: #f8f9fa; color: #555; font: 400 11px/14px Roboto, sans-serif; }
tbody th { border-bottom-color: #c4c6c8; font-size: 10px; }
th.sel { background: #e2e6e9; }
.corner { border-width: 0 4px 4px 0; }
thead th:last-child { border-right: 0; }
td { position: relative; height: inherit; padding: 1px 0 1px 2px; border: solid #000; border-width: 0 1px 1px 0; vertical-align: bottom; white-space: pre; }
td.tail { border-right: 0; border-bottom-color: #e0e0e0; padding: 0; }
.r3 { height: 19px; }
.r3 td { border-right-color: #e0e0e0; }
.r4 { height: 33px; }
.r4 td { padding-left: 0; text-align: center; font-weight: 700; }
.r11 { height: 76px; }
.r11 td { vertical-align: top; padding-top: 3px; }
td.idx { padding-left: 0; text-align: center; font-weight: 700; }
td a { color: #1155cc; text-decoration: underline; }
.drop { position: absolute; right: 5px; bottom: 7px; width: 0; height: 0; border: 4px solid transparent; border-top-color: #808080; border-bottom: 0; }
.cursor { position: absolute; inset: -1px -1px -1px 0; border: solid #1a73e8; border-width: 2px 1px; }
.cursor::after { content: ''; position: absolute; right: -3px; bottom: -4px; width: 6px; height: 6px; background: #1a73e8; }
.vscroll { flex: none; width: 11px; display: flex; flex-direction: column; align-items: center; border-left: 1px solid #c8cacc; }
.vhead { width: 10px; height: 23px; border: solid #b7b7b7; border-width: 1px 0; background: #f8f9fa; }
.vthumb { width: 7px; height: 23px; margin: 2px 0 auto; border-radius: 4px; background: #d5d8db; }
.vscroll button { width: 10px; height: 14px; border-top: 1px solid #dcdee0; background: #f8f9fa; }
.vscroll i, .hscroll i { border: 3px solid transparent; }
.vscroll .up { border-bottom-color: #a0a2a4; border-top: 0; }
.vscroll .down { border-top-color: #a0a2a4; border-bottom: 0; }
.hscroll { flex: none; height: 11px; margin-left: 38px; border: solid #c8cacc; border-width: 1px 0 0 1px; display: flex; }
.track { flex: 1; padding: 1px; }
.track span { display: block; width: 57%; height: 7px; border-radius: 4px; background: #d2d5d9; }
.hscroll button { width: 14px; border-left: 1px solid #dcdee0; }
.hscroll .left { border-right-color: #a0a2a4; border-left: 0; }
.hscroll .rt { border-left-color: #a0a2a4; border-right: 0; }
.hscroll b { width: 11px; border-left: 1px solid #dcdee0; background: #f8f9fa; }

.tabs { flex: none; height: 34px; padding-left: 36px; display: flex; align-items: stretch; border-top: 1px solid #dfe1e4; background: linear-gradient(#eff1f3, #dee0e2); color: #75797d; font: 500 13px/20px Roboto, sans-serif; }
.plus { width: 24px; }
.plus svg { width: 10px; height: 10px; fill: #55585c; }
.all { margin-left: 3px; width: 36px; padding-right: 10px; }
.all svg { width: 12px; height: 11px; fill: #55585c; }
.stab { padding: 0 16px 0 14px; gap: 11px; background: #e8eaed; border-right: 1px solid #d5d8db; }
.plus, .all, .stab, .explore { padding-bottom: 2px; }
.stab.on { margin-left: 5px; background: #fff; color: #188038; box-shadow: 0 0 3px #bbb; }
.stab.on .caret { border-top-color: #188038; }
.stab:not(.on) .caret { border-top-color: #75797d; }
.explore { margin-left: auto; width: 139px; justify-content: flex-start; padding-left: 11px; gap: 11px; border-left: 1px solid #c5c8cb; background: #f8f9fa; color: #0f9d58; font: 500 11px/20px Roboto, sans-serif; }
.explore svg { width: 17px; height: 18px; }
.side { flex: none; width: 50px; border-left: 1px solid #dadce0; display: flex; flex-direction: column; align-items: center; padding: 19px 0 15px; gap: 35px; }
.side svg { width: 15px; height: 15px; }
.side .tasks { width: 17px; height: 17px; }
.side button { margin-top: auto; }
.side button svg { width: 18px; height: 18px; fill: #44474b; }
</style>
